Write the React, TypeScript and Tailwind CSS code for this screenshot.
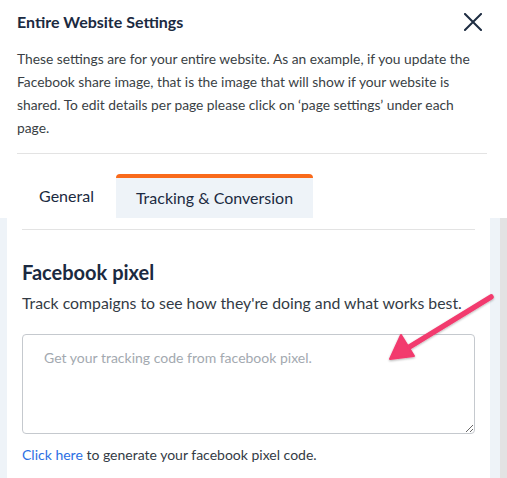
const CloseIcon = () => (
    <svg width="18" height="18" viewBox="0 0 18 18" className="text-[#1e2d42]">
        <path d="M1 1L17 17M17 1L1 17" stroke="currentColor" strokeWidth="2" strokeLinecap="square" />
    </svg>
);

const App = () => {
    return (
        <div className="relative w-[507px] h-[478px] overflow-hidden bg-white font-['Lato','Liberation_Sans',sans-serif] text-[#333b45]">

            {/* Header */}
            <div className="pl-[17px] pr-[20px] pt-[11px]">
                <div className="flex items-center justify-between h-[22px]">
                    <h2 className="text-[16px] font-bold text-[#1b2a41]">Entire Website Settings</h2>
                    <div className="mr-[5px]">
                        <CloseIcon />
                    </div>
                </div>
                <p className="mt-[14px] text-[13.8px] leading-[23px] text-[#3a3f45]">
                    These settings are for your entire website. As an example, if you update the
                    Facebook share image, that is the image that will show if your website is
                    shared. To edit details per page please click on ‘page settings’ under each
                    page.
                </p>
                <div className="mt-[14px] border-t border-[#e3e3e3]"></div>
            </div>

            {/* Tabs */}
            <div className="flex pl-[17px] mt-[20px]">
                <div className="w-[99px] h-[44px] flex items-center justify-center text-[16px] text-[#1b2a41]">
                    General
                </div>
                <div className="w-[197px] h-[44px] flex items-center justify-center text-[16px] text-[#1b2a41] bg-[#eef3f8] border-t-4 border-[#f96a1b] rounded-t-[4px]">
                    Tracking &amp; Conversion
                </div>
            </div>

            {/* Body */}
            <div className="flex h-[260px]">
                <div className="w-[7px] bg-[#eef3f8]"></div>
                <div className="w-[483px] bg-white px-[15px] pt-[11px]">
                    <div className="border-t border-[#e3e3e3]"></div>
                    <h3 className="mt-[28px] text-[20px] leading-[28px] font-bold text-[#1b2a41]">Facebook pixel</h3>
                    <p className="mt-[5px] text-[15.8px] leading-[24px] text-[#333b45]">
                        Track compaigns to see how they're doing and what works best.
                    </p>
                    <textarea
                        className="mt-[19px] block w-[453px] h-[100px] rounded-[4px] border border-[#c5c9ce] px-[21px] py-[13px] text-[14px] leading-[20px] placeholder:text-[#a3a9b0] outline-none"
                        placeholder="Get your tracking code from facebook pixel."
                    ></textarea>
                    <p className="mt-[11px] text-[14px] leading-[20px] text-[#333b45]">
                        <a href="#" className="text-[#2d6fe3]">Click here</a> to generate your facebook pixel code.
                    </p>
                </div>
                <div className="w-[10px] bg-[#eef3f8]"></div>
                <div className="w-[7px] bg-[#e3e3e3]"></div>
            </div>

            {/* Annotation arrow */}
            <svg className="absolute left-0 top-0 pointer-events-none" width="507" height="478" viewBox="0 0 507 478">
                <defs>
                    <filter id="sh" x="-20%" y="-20%" width="140%" height="140%">
                        <feDropShadow dx="0" dy="1" stdDeviation="1" floodColor="#000" floodOpacity="0.3" />
                    </filter>
                </defs>
                <g filter="url(#sh)" fill="#f23a6e" stroke="#f23a6e" strokeLinecap="round" strokeLinejoin="round">
                    <line x1="491" y1="297" x2="406" y2="349" strokeWidth="5.5" />
                    <polygon points="390,359 401,335 414,356" strokeWidth="2" />
                </g>
            </svg>
        </div>
    );
};

export default App;
